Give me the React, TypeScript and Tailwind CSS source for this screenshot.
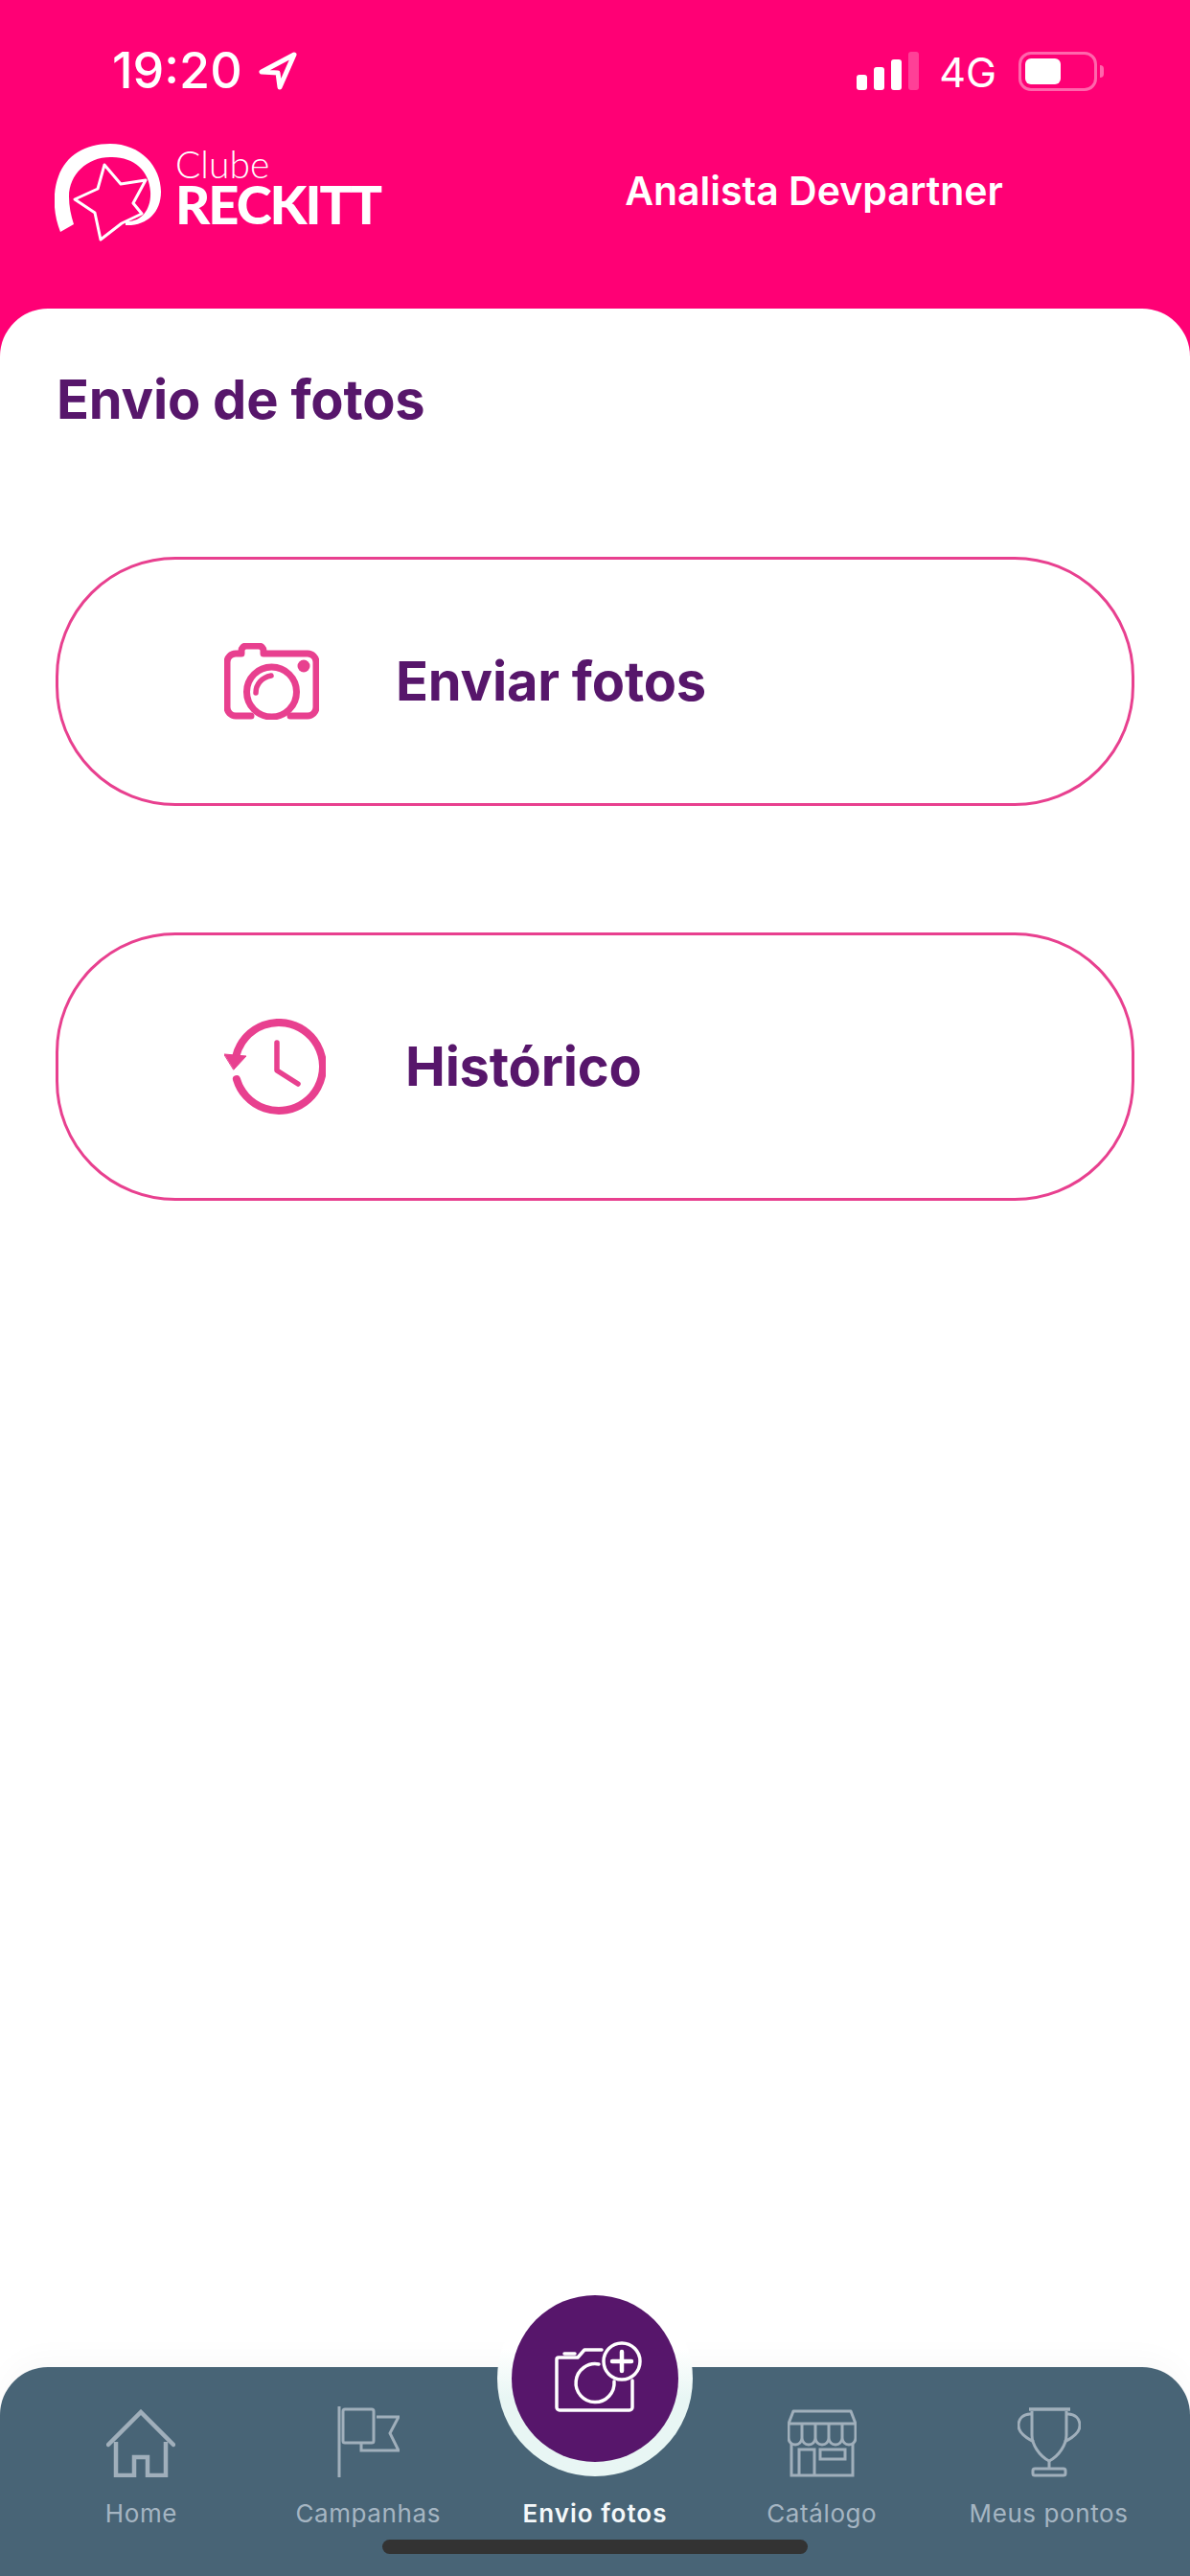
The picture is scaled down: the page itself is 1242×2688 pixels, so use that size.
import type { FC, ReactNode } from 'react';

const PINK = '#e8408f';

const CameraIcon: FC = () => (
  <svg width="99" height="80" viewBox="0 0 99 80" fill="none" stroke={PINK} strokeWidth="7" strokeLinejoin="round" strokeLinecap="round">
    <path d="M28 76H12a9 9 0 0 1-9-9V20a9 9 0 0 1 9-9h6V8a5 5 0 0 1 5-5h13a5 5 0 0 1 5 5v3h46a9 9 0 0 1 9 9v47a9 9 0 0 1-9 9H69" />
    <ellipse cx="49.5" cy="51" rx="26" ry="26" />
    <path d="M33 52c0-9 6-16 16-18" strokeWidth="5.5" />
    <circle cx="83" cy="24" r="6.5" fill={PINK} stroke="none" />
  </svg>
);

const ClockIcon: FC = () => (
  <svg width="106" height="101" viewBox="0 0 106 101" fill="none" stroke={PINK} strokeLinecap="round" strokeLinejoin="round">
    <path d="M12.9 63A46 46 0 1 0 12.6 38" strokeWidth="8" />
    <path d="M0 37l23 2-13 14z" fill={PINK} stroke={PINK} strokeWidth="1" />
    <path d="M55 25v29l22 14" strokeWidth="5.5" />
  </svg>
);

const HomeIcon: FC = () => (
  <svg width="72" height="71" viewBox="0 0 72 71" fill="none" stroke="#a0afbb" strokeWidth="4.5">
    <path d="M2 37L36 3l34 34" strokeLinecap="round" />
    <path d="M10 34v35h19V50h14v19h19V34" />
  </svg>
);

const FlagIcon: FC = () => (
  <svg width="65" height="74" viewBox="0 0 65 74" fill="none" stroke="#a0afbb" strokeWidth="3">
    <path d="M2 0v74" />
    <rect x="6" y="3" width="32" height="35" rx="2" />
    <path d="M41 11h23l-9 17 9 18H25v-7" />
  </svg>
);

const StoreIcon: FC = () => (
  <svg width="72" height="71" viewBox="0 0 72 71" fill="none" stroke="#a0afbb" strokeWidth="3">
    <path d="M6 2h60l5 13H1z" strokeLinejoin="round" />
    <path d="M1 15v15a7 7 0 0 0 14 0 7 7 0 0 0 14 0 7 7 0 0 0 14 0 7 7 0 0 0 14 0 7 7 0 0 0 14 0V15" />
    <path d="M15 15v15M29 15v15M43 15v15M57 15v15" />
    <path d="M4 36v33h64V36" />
    <path d="M12 69V42h16v27" />
    <rect x="34" y="42" width="26" height="10" />
  </svg>
);

const TrophyIcon: FC = () => (
  <svg width="66" height="73" viewBox="0 0 66 73" fill="none" stroke="#a0afbb" strokeWidth="3">
    <path d="M12 2h43" strokeWidth="3.5" />
    <path d="M15 4v25c0 10 8 22 18 27 10-5 18-17 18-27V4" />
    <path d="M15 7C6 6 1 12 1 19s6 12 16 17" />
    <path d="M51 7c9-1 14 5 14 12s-6 12-16 17" />
    <path d="M33 56v8" />
    <rect x="16" y="64" width="34" height="7" rx="2" />
  </svg>
);

const CameraPlusIcon: FC = () => (
  <svg width="91" height="74" viewBox="0 0 91 74" fill="none" stroke="#ffffff" strokeWidth="3.5" strokeLinecap="round" strokeLinejoin="round">
    <path d="M49 9H31l-7 8H4a2 2 0 0 0-2 2v50a3 3 0 0 0 3 3h73a3 3 0 0 0 3-3V41" />
    <path d="M10 13h11" />
    <path d="M46 24a20 20 0 1 0 16 18" />
    <circle cx="70" cy="21" r="19" />
    <path d="M60 21h20M70 11v20" strokeWidth="4.5" />
  </svg>
);

const LocationArrow: FC = () => (
  <svg width="40" height="40" viewBox="0 0 40 40" fill="none" stroke="#ffffff" strokeWidth="5" strokeLinejoin="round">
    <path d="M37 3L3 21l17 1 2 15z" />
  </svg>
);

const SignalBars: FC = () => (
  <div className="flex items-end gap-[7px] h-[40px]">
    <div className="w-[11px] h-[16px] rounded-[3px] bg-white" />
    <div className="w-[11px] h-[24px] rounded-[3px] bg-white" />
    <div className="w-[11px] h-[32px] rounded-[3px] bg-white" />
    <div className="w-[11px] h-[40px] rounded-[3px] bg-white/25" />
  </div>
);

const Battery: FC = () => (
  <div className="flex items-center gap-[3px]">
    <div className="w-[82px] h-[41px] rounded-[13px] border-[3px] border-white/40 p-[4px]">
      <div className="w-[37px] h-full rounded-[6px] bg-white" />
    </div>
    <div className="w-[4px] h-[13px] rounded-r-full bg-white/40" />
  </div>
);

const LogoMark: FC = () => (
  <svg width="118" height="102" viewBox="0 0 118 102">
    <path
      d="M6 92C-2 72-2 50 4 34 12 12 32 0 58 0c32 0 53 24 53 50 0 22-15 36-37 35v-4c17 1 27-13 26-31C99 28 82 13 58 14 34 14 15 32 15 55c0 10 2 20 5 29z"
      fill="#ffffff"
    />
    <path
      d="M52 22l17 20 26-4-13 24 9 11-21 10-22 17-6-28-21-14 24-11z"
      fill="#ff0075"
      stroke="#ffffff"
      strokeWidth="3"
      strokeLinejoin="round"
    />
  </svg>
);

const NavItem: FC<{ icon?: ReactNode; label: string; active?: boolean }> = ({ icon, label, active }) => (
  <div className="flex flex-col items-center">
    <div className="h-[74px] flex items-end justify-center">{icon}</div>
    <span
      className={`mt-[22px] text-[26px] leading-[32px] whitespace-nowrap ${
        active ? 'font-semibold text-[#f4f8fa] tracking-[1px]' : 'text-[#a5b5c2] tracking-[0.6px]'
      }`}
    >
      {label}
    </span>
  </div>
);

const ActionButton: FC<{ icon: ReactNode; label: string; className: string; gapClass: string }> = ({
  icon,
  label,
  className,
  gapClass
}) => (
  <button className={`flex items-center w-full rounded-[125px] border-[3px] border-[#e8408f] pl-[173px] ${className}`}>
    {icon}
    <span className={`text-[56px] leading-none font-bold tracking-[-0.2px] text-[#57166b] ${gapClass}`}>{label}</span>
  </button>
);

export default function App() {
  return (
    <div className="flex flex-col h-[2688px] w-[1242px] overflow-hidden bg-[#ff0075] font-['Inter',sans-serif]">
      {/* ヘッダー */}
      <header className="h-[322px] shrink-0 text-white">
        <div className="flex items-center justify-between pt-[53px] pl-[117px] pr-[90px]">
          <div className="flex items-center gap-[17px]">
            <span className="text-[52px] leading-[42px] font-medium">19:20</span>
            <LocationArrow />
          </div>
          <div className="flex items-center">
            <SignalBars />
            <span className="ml-[21px] mr-[23px] text-[43px] leading-[42px] translate-y-[1px]">4G</span>
            <Battery />
          </div>
        </div>
        <div className="flex items-start mt-[55px] pl-[57px]">
          <LogoMark />
          <div className="ml-[8px] mt-[3px] flex flex-col font-['Lato',sans-serif]">
            <span className="text-[39px] leading-[37px] font-light">Clube</span>
            <span className="text-[56px] leading-[46px] font-black tracking-[-2px]">RECKITT</span>
          </div>
          <span className="ml-[255px] mt-[28px] text-[41px] leading-[42px] font-semibold">Analista Devpartner</span>
        </div>
      </header>

      {/* コンテンツ */}
      <main className="flex-1 flex flex-col bg-white rounded-t-[50px]">
        <div className="flex-1 px-[58px] pt-[67px]">
          <h1 className="ml-[1px] text-[56px] leading-[56px] font-bold tracking-[-0.2px] text-[#57166b]">Envio de fotos</h1>
          <div className="mt-[136px]">
            <ActionButton icon={<CameraIcon />} label="Enviar fotos" className="h-[260px]" gapClass="ml-[80px]" />
          </div>
          <div className="mt-[132px]">
            <ActionButton icon={<ClockIcon />} label="Histórico" className="h-[280px]" gapClass="ml-[83px]" />
          </div>
        </div>

        <nav className="relative h-[218px] shrink-0 grid grid-cols-5 px-[29px] pt-[41px] rounded-t-[50px] bg-[#486476] shadow-[0_-12px_30px_rgba(0,0,0,0.025)]">
          <NavItem icon={<HomeIcon />} label="Home" />
          <NavItem icon={<FlagIcon />} label="Campanhas" />
          <NavItem label="Envio fotos" active />
          <NavItem icon={<StoreIcon />} label="Catálogo" />
          <NavItem icon={<TrophyIcon />} label="Meus pontos" />
          <div className="absolute left-[519px] -top-[90px] w-[204px] h-[204px] rounded-full bg-gradient-to-b from-white from-35% to-[#e8f6f4] to-60% flex items-center justify-center">
            <div className="w-[174px] h-[174px] rounded-full bg-[#57166b] flex items-center justify-center">
              <div className="mb-[4px] ml-[7px]">
                <CameraPlusIcon />
              </div>
            </div>
          </div>
          <div className="absolute left-[399px] bottom-[23px] w-[444px] h-[15px] rounded-full bg-[#333333]" />
        </nav>
      </main>
    </div>
  );
}
